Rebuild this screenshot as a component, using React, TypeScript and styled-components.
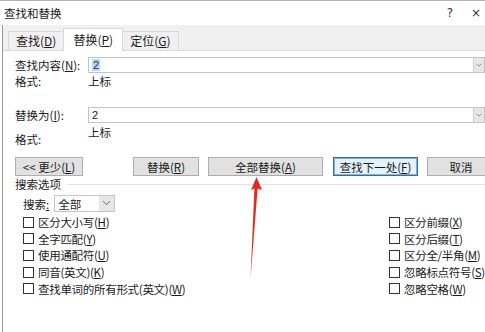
import styled, { createGlobalStyle } from 'styled-components';

// Global page reset
const GlobalStyle = createGlobalStyle`
  html, body {
    margin: 0;
    padding: 0;
    background: #fff;
    overflow: hidden;
  }
  body {
    font-family: "Noto Sans CJK SC", "Noto Sans", sans-serif;
    font-size: 11.5px;
    color: #1a1a1a;
  }
`;

// Dialog window
const Window = styled.div`
  position: relative;
  width: 485px;
  height: 332px;
  overflow: hidden;
  display: flex;
  flex-direction: column;
  background: #fff;
`;

const TitleBar = styled.div`
  height: 25px;
  display: flex;
  align-items: center;
  padding-left: 4px;
  border-top: 1px solid #b4b4b4;
  box-sizing: border-box;
`;

const Title = styled.span`
  flex: 1;
  line-height: 14px;
`;

const TitleButton = styled.span<{ $w: number }>`
  width: ${(p) => p.$w}px;
  text-align: center;
  font-family: "DejaVu Sans", sans-serif;
  font-size: 12px;
  color: #333;
`;

const Body = styled.div`
  flex: 1;
  margin-left: 2px;
  border-left: 1px solid #9a9a9a;
  display: flex;
  flex-direction: column;
`;

const TabStrip = styled.div`
  height: 26px;
  background: #f0f0f0;
  display: flex;
  align-items: flex-end;
  padding-left: 5px;
  border-bottom: 1px solid #d9d9d9;
  box-sizing: border-box;
`;

const Tab = styled.div<{ $active?: boolean }>`
  height: ${(p) => (p.$active ? 22 : 18)}px;
  padding: 0 ${(p) => (p.$active ? 9 : 7)}px;
  display: flex;
  align-items: center;
  background: ${(p) => (p.$active ? '#fff' : '#f0f0f0')};
  border: 1px solid #d9d9d9;
  border-bottom: none;
  margin-bottom: ${(p) => (p.$active ? -1 : 0)}px;
  margin-left: ${(p) => (p.$active ? -1 : 0)}px;
  margin-right: ${(p) => (p.$active ? -1 : 0)}px;
  position: relative;
  z-index: ${(p) => (p.$active ? 1 : 0)};
  line-height: 14px;
  font-size: 12px;
`;

const Key = styled.span`
  text-decoration: underline;
`;

const Panel = styled.div`
  flex: 1;
  padding: 6px 0 0 12px;
  display: flex;
  flex-direction: column;
`;

const FieldRow = styled.div<{ $mt?: number }>`
  display: flex;
  align-items: center;
  height: 16px;
  margin-top: ${(p) => p.$mt ?? 0}px;
`;

const Label = styled.span`
  width: 73px;
  flex-shrink: 0;
  line-height: 14px;
`;

const Input = styled.div`
  position: relative;
  width: 398px;
  height: 16px;
  box-sizing: border-box;
  border: 1px solid #c4c4c4;
  display: flex;
  align-items: center;
  padding-left: 3px;
  font-family: "Liberation Sans", sans-serif;
  font-size: 11px;
`;

const Selected = styled.span`
  background: #b9d7f3;
  color: #14305c;
  padding: 0 1px;
`;

const DropButton = styled.span`
  position: absolute;
  right: 0;
  top: 0;
  bottom: 0;
  width: 10px;
  background: #e6e6e6;
  border-left: 1px solid #d0d0d0;
  display: flex;
  align-items: center;
  justify-content: center;
`;

const FormatRow = styled.div<{ $labelDrop?: number; $mt?: number }>`
  display: flex;
  align-items: flex-start;
  height: ${(p) => 14 + (p.$labelDrop ?? 0)}px;
  margin-top: ${(p) => p.$mt ?? 0}px;
  line-height: 14px;

  & > span:first-child {
    width: 73px;
    padding-top: ${(p) => p.$labelDrop ?? 0}px;
  }
`;

const ButtonRow = styled.div`
  display: flex;
  margin-top: 11px;
  height: 19px;
`;

const Button = styled.div<{ $w: number; $ml?: number; $focus?: boolean }>`
  width: ${(p) => p.$w}px;
  margin-left: ${(p) => p.$ml ?? 0}px;
  flex-shrink: 0;
  box-sizing: border-box;
  height: 19px;
  display: flex;
  align-items: center;
  justify-content: center;
  background: ${(p) => (p.$focus ? '#e5f1fb' : '#e1e1e1')};
  border: 1px solid ${(p) => (p.$focus ? '#2f6fa8' : '#adadad')};
  box-shadow: ${(p) => (p.$focus ? 'inset 0 0 0 1px #7fb1dc' : 'none')};
  line-height: 14px;
`;

const GroupHeader = styled.div`
  display: flex;
  align-items: center;
  gap: 6px;
  height: 14px;
  margin-top: 1px;
  line-height: 14px;

  &::after {
    content: '';
    flex: 1;
    height: 1px;
    background: #e3e3e3;
  }
`;

const SearchRow = styled.div`
  display: flex;
  align-items: center;
  margin: 4px 0 0 8px;
  height: 17px;
  gap: 5px;
`;

const Select = styled.div`
  position: relative;
  width: 61px;
  height: 17px;
  box-sizing: border-box;
  border: 1px solid #c4c4c4;
  display: flex;
  align-items: center;
  padding-left: 3px;
  line-height: 14px;
`;

const SelectArrow = styled.span`
  position: absolute;
  right: 0;
  top: 0;
  bottom: 0;
  width: 15px;
  background: #e6e6e6;
  display: flex;
  align-items: center;
  justify-content: center;
`;

const Options = styled.div`
  display: grid;
  grid-template-columns: 366px 1fr;
  grid-auto-flow: column;
  grid-template-rows: repeat(5, 16.6px);
  margin: 2px 0 0 8px;
`;

const Option = styled.label`
  display: flex;
  align-items: center;
  gap: 4px;
  line-height: 14px;
  white-space: nowrap;
`;

const OptionText = styled.span`
  letter-spacing: -0.3px;
`;

const Box = styled.span`
  width: 11px;
  height: 11px;
  box-sizing: border-box;
  border: 1px solid #333;
  background: #fff;
  flex-shrink: 0;
`;

const Arrow = styled.svg`
  position: absolute;
  left: 0;
  top: 0;
  pointer-events: none;
`;

const left = [
  ['区分大小写', 'H'],
  ['全字匹配', 'Y'],
  ['使用通配符', 'U'],
  ['同音(英文)', 'K'],
  ['查找单词的所有形式(英文)', 'W'],
];

const right = [
  ['区分前缀', 'X'],
  ['区分后缀', 'T'],
  ['区分全/半角', 'M'],
  ['忽略标点符号', 'S'],
  ['忽略空格', 'W'],
];

const Chevron = ({ size }: { size: number }) => (
  <svg width={size} height={size * 0.7} viewBox="0 0 9 6">
    <path d="M1 1l3.5 3.5L8 1" fill="none" stroke="#666" strokeWidth="1" />
  </svg>
);

const App = () => {
  return (
    <>
      <GlobalStyle />
      <Window>
        <TitleBar>
          <Title>查找和替换</Title>
          <TitleButton $w={14}>?</TitleButton>
          <TitleButton $w={18} style={{ marginLeft: 10 }}>×</TitleButton>
        </TitleBar>
        <Body>
          <TabStrip>
            <Tab>查找(<Key>D</Key>)</Tab>
            <Tab $active>替换(<Key>P</Key>)</Tab>
            <Tab>定位(<Key>G</Key>)</Tab>
          </TabStrip>
          <Panel>
            <FieldRow>
              <Label>查找内容(<Key>N</Key>):</Label>
              <Input>
                <Selected>2</Selected>
                <DropButton>
                  <Chevron size={6} />
                </DropButton>
              </Input>
            </FieldRow>
            <FormatRow $mt={1}>
              <span>格式:</span>
              <span>上标</span>
            </FormatRow>
            <FieldRow $mt={19}>
              <Label>替换为(<Key>I</Key>):</Label>
              <Input>
                2
                <DropButton>
                  <Chevron size={6} />
                </DropButton>
              </Input>
            </FieldRow>
            <FormatRow $labelDrop={7} $mt={2}>
              <span>格式:</span>
              <span>上标</span>
            </FormatRow>
            <ButtonRow>
              <Button $w={68}>&lt;&lt; 更少(<Key>L</Key>)</Button>
              <Button $w={66} $ml={50}>替换(<Key>R</Key>)</Button>
              <Button $w={115} $ml={9}>全部替换(<Key>A</Key>)</Button>
              <Button $w={85} $ml={10} $focus>查找下一处(<Key>F</Key>)</Button>
              <Button $w={68} $ml={9}>取消</Button>
            </ButtonRow>
            <GroupHeader>搜索选项</GroupHeader>
            <SearchRow>
              <span>搜索<Key>:</Key></span>
              <Select>
                全部
                <SelectArrow>
                  <Chevron size={9} />
                </SelectArrow>
              </Select>
            </SearchRow>
            <Options>
              {left.map(([t, k]) => (
                <Option key={t}>
                  <Box />
                  <OptionText>{t}(<Key>{k}</Key>)</OptionText>
                </Option>
              ))}
              {right.map(([t, k]) => (
                <Option key={t}>
                  <Box />
                  <OptionText>{t}(<Key>{k}</Key>)</OptionText>
                </Option>
              ))}
            </Options>
          </Panel>
        </Body>
        <Arrow width="485" height="332" viewBox="0 0 485 332">
          <polygon
            points="256.5,177 262,190 257.6,188.5 250.5,279 254.4,188.5 251,190"
            fill="#e3281f"
          />
        </Arrow>
      </Window>
    </>
  );
};

export default App;
